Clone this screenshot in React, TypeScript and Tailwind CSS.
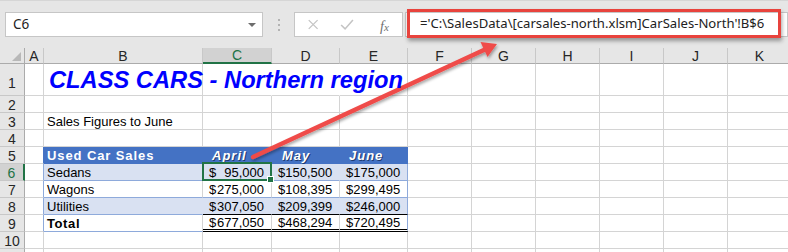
import React from 'react';

const COLS = [
  { key: 'A', w: 'w-[19px]' },
  { key: 'B', w: 'w-[159px]' },
  { key: 'C', w: 'w-[69px]' },
  { key: 'D', w: 'w-[68px]' },
  { key: 'E', w: 'w-[68px]' },
  { key: 'F', w: 'w-[64px]' },
  { key: 'G', w: 'w-[64px]' },
  { key: 'H', w: 'w-[64px]' },
  { key: 'I', w: 'w-[64px]' },
  { key: 'J', w: 'w-[64px]' },
  { key: 'K', w: 'w-[64px]' },
];

const cell = 'shrink-0 flex items-end leading-[14px] border-r border-b';
const grid = 'border-[#d4d4d4]';
const tbl = 'border-[#8eaadb]';

const Money = ({ v, cls = '' }: { v: string; cls?: string }) => (
  <span className={`flex w-full justify-between pl-[6px] pr-[7px] ${cls}`}>
    <span>$</span>
    <span>{v}</span>
  </span>
);

const RowHead = ({ n, h, active, hideNum }: { n: number; h: string; active?: boolean; hideNum?: boolean }) => (
  <div
    className={`shrink-0 w-[25px] ${h} flex items-end justify-center leading-[14px] text-[14px] border-b border-[#c8c8c8] ${
      active ? 'bg-[#d2d2d2] text-[#217346] border-r-2 border-r-[#217346]' : 'bg-[#e6e6e6] text-[#262626] border-r border-r-[#ababab]'
    } ${n === 1 ? 'pb-[5px]' : ''}`}
  >
    {hideNum ? null : n}
  </div>
);

const EmptyRest = ({ h }: { h: string }) => (
  <>
    {COLS.slice(5).map(c => (
      <div key={c.key} className={`${cell} ${c.w} ${h} ${grid}`} />
    ))}
  </>
);

const Row = ({ n, h = 'h-[17px]', aBorder = grid, hideNum, children }: { n: number; h?: string; aBorder?: string; hideNum?: boolean; children?: React.ReactNode }) => (
  <div className="flex">
    <RowHead n={n} h={h} active={n === 6} hideNum={hideNum} />
    <div className={`${cell} w-[19px] ${h} border-b-[#d4d4d4] ${aBorder}`} />
    {children ?? (
      <>
        <div className={`${cell} w-[159px] ${h} ${grid}`} />
        <div className={`${cell} w-[69px] ${h} ${grid}`} />
        <div className={`${cell} w-[68px] ${h} ${grid}`} />
        <div className={`${cell} w-[68px] ${h} ${grid}`} />
      </>
    )}
    <EmptyRest h={h} />
  </div>
);

export default function App() {
  return (
    <div className="relative w-[788px] h-[252px] overflow-hidden bg-white font-['Liberation_Sans',Arial,sans-serif] text-[13px] text-black">
      {/* formula bar strip */}
      <div className="h-[48px] bg-[#e6e6e6] border-t border-[#d6d6d6] flex items-start pt-[11px] pl-[5px]">
        <div className="w-[258px] h-[25px] bg-white border border-[#c6c6c6] flex items-center justify-between pl-[7px] pr-[6px] font-['Noto_Sans',sans-serif] text-[13.5px] text-[#222]">
          <span>C6</span>
          <span className="w-0 h-0 border-l-[4px] border-r-[4px] border-t-[4px] border-l-transparent border-r-transparent border-t-[#6d6d6d]" />
        </div>
        <div className="w-[31px] h-[25px] flex flex-col items-center justify-center gap-[3px]">
          <span className="w-[2px] h-[2px] bg-[#b3b3b3]" />
          <span className="w-[2px] h-[2px] bg-[#b3b3b3]" />
          <span className="w-[2px] h-[2px] bg-[#b3b3b3]" />
        </div>
        <div className="w-[109px] h-[25px] bg-white border border-[#c6c6c6] flex items-center">
          <svg width="109" height="23" viewBox="0 0 109 23">
            <path d="M14 7 L23 16 M23 7 L14 16" stroke="#c4c4c4" strokeWidth="1.3" fill="none" />
            <path d="M47 12 L51 16 L59 7" stroke="#c4c4c4" strokeWidth="1.6" fill="none" />
          </svg>
        </div>
        <div className="flex-1 ml-[2px] h-[25px] bg-white border border-[#c6c6c6]" />
      </div>
      <span className="absolute left-[380px] top-[16px] font-['Liberation_Serif',serif] italic text-[14px] text-[#6f6f6f]">
        f<span className="text-[11px]">x</span>
      </span>

      {/* red highlight around formula */}
      <div className="absolute left-[407px] top-[9px] w-[374px] h-[29px] border-[3px] border-[#e8433d] shadow-[1px_3px_4px_rgba(0,0,0,0.35)] flex items-center pl-[10px] font-['Noto_Sans',sans-serif] text-[13.1px] text-[#222] whitespace-nowrap">
        ='C:\SalesData\[carsales-north.xlsm]CarSales-North'!B$6
      </div>

      {/* column headers */}
      <div className="flex h-[16px]">
        <div className="shrink-0 w-[25px] h-[16px] bg-[#e6e6e6] border-r border-b border-[#ababab] relative">
          <span className="absolute right-[3px] bottom-[2px] w-0 h-0 border-l-[9px] border-t-[9px] border-l-transparent border-t-transparent border-r-0 border-b-0 [border-bottom:9px_solid_#b8b8b8]" />
        </div>
        {COLS.map(c => (
          <div
            key={c.key}
            className={`shrink-0 ${c.w} h-[16px] flex items-end justify-center leading-[14px] text-[14px] border-r border-r-[#c8c8c8] ${
              c.key === 'C' ? 'bg-[#d2d2d2] text-[#217346] border-b-2 border-b-[#217346]' : 'bg-[#e6e6e6] text-[#262626] border-b border-b-[#ababab]'
            }`}
          >
            {c.key}
          </div>
        ))}
      </div>

      {/* rows */}
      <Row n={1} h="h-[32px]">
        <div className={`${cell} w-[159px] h-[32px] ${grid} overflow-visible whitespace-nowrap relative z-10 pl-[5px] pb-[3px] leading-[24px] text-[23.7px] font-bold italic text-[#0000ff]`}>
          CLASS CARS - Northern region
        </div>
        <div className={`${cell} w-[69px] h-[32px] ${grid} border-r-white`} />
        <div className={`${cell} w-[68px] h-[32px] ${grid} border-r-white`} />
        <div className={`${cell} w-[68px] h-[32px] ${grid}`} />
      </Row>
      <Row n={2} />
      <Row n={3}>
        <div className={`${cell} w-[159px] h-[17px] ${grid} pl-[3px]`}>Sales Figures to June</div>
        <div className={`${cell} w-[69px] h-[17px] ${grid}`} />
        <div className={`${cell} w-[68px] h-[17px] ${grid}`} />
        <div className={`${cell} w-[68px] h-[17px] ${grid}`} />
      </Row>
      <Row n={4} />
      <Row n={5} aBorder="border-r-[#4472c4]">
        <div className={`${cell} w-[159px] h-[17px] bg-[#4472c4] border-[#4472c4] pl-[3px] font-bold text-white tracking-[0.9px]`}>Used Car Sales</div>
        <div className={`${cell} w-[69px] h-[17px] bg-[#4472c4] border-[#4472c4] pl-[9px] font-bold italic text-white tracking-[1px] [text-shadow:1px_1px_0_#1e3a70]`}>April</div>
        <div className={`${cell} w-[68px] h-[17px] bg-[#4472c4] border-[#4472c4] pl-[10px] font-bold italic text-white tracking-[1px] [text-shadow:1px_1px_0_#1e3a70]`}>May</div>
        <div className={`${cell} w-[68px] h-[17px] bg-[#4472c4] border-[#4472c4] pl-[9px] font-bold italic text-white tracking-[1px] [text-shadow:1px_1px_0_#1e3a70]`}>June</div>
      </Row>
      <Row n={6} aBorder="border-r-[#8eaadb]">
        <div className={`${cell} w-[159px] h-[17px] bg-[#d9e1f2] border-r-[#d9e1f2] border-b-[#8eaadb] pl-[3px]`}>Sedans</div>
        <div className={`${cell} w-[69px] h-[17px] bg-[#d9e1f2] border-r-[#d9e1f2] border-b-[#8eaadb] relative`}>
          <Money v="95,000" />
          <span className="absolute -left-px -top-[2px] -right-[1px] -bottom-[1px] border-2 border-[#217346]" />
          <span className="absolute -right-[3px] -bottom-[3px] w-[5px] h-[5px] bg-[#217346] border border-white box-content" />
        </div>
        <div className={`${cell} w-[68px] h-[17px] bg-[#d9e1f2] border-r-[#d9e1f2] border-b-[#8eaadb]`}><Money v="150,500" /></div>
        <div className={`${cell} w-[68px] h-[17px] bg-[#d9e1f2] ${tbl}`}><Money v="175,000" /></div>
      </Row>
      <Row n={7} aBorder="border-r-[#8eaadb]">
        <div className={`${cell} w-[159px] h-[17px] border-r-[#d4d4d4] border-b-[#8eaadb] pl-[3px]`}>Wagons</div>
        <div className={`${cell} w-[69px] h-[17px] border-r-[#d4d4d4] border-b-[#8eaadb]`}><Money v="275,000" /></div>
        <div className={`${cell} w-[68px] h-[17px] border-r-[#d4d4d4] border-b-[#8eaadb]`}><Money v="108,395" /></div>
        <div className={`${cell} w-[68px] h-[17px] ${tbl}`}><Money v="299,495" /></div>
      </Row>
      <Row n={8} aBorder="border-r-[#8eaadb]">
        <div className={`${cell} w-[159px] h-[17px] bg-[#d9e1f2] border-r-[#d9e1f2] border-b-[#8eaadb] pl-[3px]`}>Utilities</div>
        <div className={`${cell} w-[69px] h-[17px] bg-[#d9e1f2] border-r-[#d9e1f2] border-b-black`}><Money v="307,050" /></div>
        <div className={`${cell} w-[68px] h-[17px] bg-[#d9e1f2] border-r-[#d9e1f2] border-b-black`}><Money v="209,399" /></div>
        <div className={`${cell} w-[68px] h-[17px] bg-[#d9e1f2] border-r-[#8eaadb] border-b-black`}><Money v="246,000" /></div>
      </Row>
      <Row n={9} aBorder="border-r-[#8eaadb]">
        <div className={`${cell} w-[159px] h-[17px] border-r-[#d4d4d4] border-b-[#8eaadb] pl-[3px] font-bold tracking-[0.6px]`}>Total</div>
        <div className="shrink-0 flex items-end leading-[14px] w-[69px] h-[17px] border-r border-r-[#d4d4d4] border-b-[3px] border-double border-b-black"><Money v="677,050" cls="mb-[-1px]" /></div>
        <div className="shrink-0 flex items-end leading-[14px] w-[68px] h-[17px] border-r border-r-[#d4d4d4] border-b-[3px] border-double border-b-black"><Money v="468,294" cls="mb-[-1px]" /></div>
        <div className="shrink-0 flex items-end leading-[14px] w-[68px] h-[17px] border-r border-r-[#8eaadb] border-b-[3px] border-double border-b-black"><Money v="720,495" cls="mb-[-1px]" /></div>
      </Row>
      <Row n={10} />
      <Row n={11} hideNum />

      {/* red arrow */}
      <svg className="absolute left-0 top-0 pointer-events-none" width="788" height="252" viewBox="0 0 788 252">
        <defs>
          <filter id="sh" x="-10%" y="-10%" width="120%" height="130%">
            <feDropShadow dx="1" dy="2" stdDeviation="1.5" floodColor="#000" floodOpacity="0.35" />
          </filter>
        </defs>
        <g filter="url(#sh)">
          <line x1="253" y1="157" x2="486" y2="49" stroke="#ef4b48" strokeWidth="4.5" strokeLinecap="round" />
          <polygon points="497,44 487.5,57 480.5,42" fill="#ef4b48" />
        </g>
      </svg>
    </div>
  );
}
